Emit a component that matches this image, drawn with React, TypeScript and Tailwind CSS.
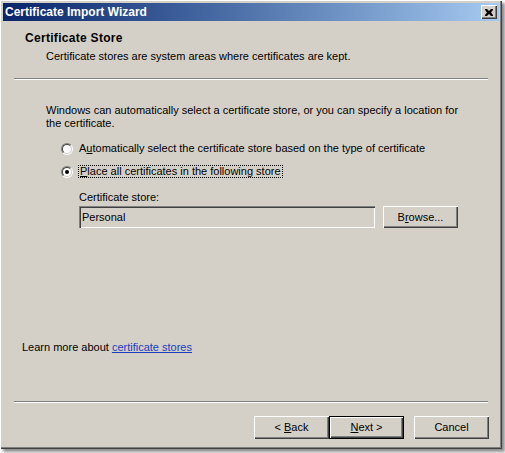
import type { ReactNode } from "react";

const font = { fontFamily: '"Liberation Sans", Arial, sans-serif' };

// classic raised button
function Btn({ children, isDefault, className = "" }: { children: ReactNode; isDefault?: boolean; className?: string }) {
  return (
    <button
      className={`flex shrink-0 items-center justify-center bg-[#d4d0c8] text-[11px] text-black ${
        isDefault
          ? "border border-black shadow-[inset_1px_1px_#fff,inset_-1px_-1px_#404040,inset_-2px_-2px_#808080]"
          : "shadow-[inset_1px_1px_#fff,inset_-1px_-1px_#404040,inset_-2px_-2px_#808080]"
      } ${className}`}
    >
      {children}
    </button>
  );
}

function Radio({ checked }: { checked?: boolean }) {
  return (
    <span className="relative flex h-[12px] w-[12px] shrink-0 items-center justify-center rounded-full border border-[#808080] border-b-white border-r-white">
      <span className="flex h-[10px] w-[10px] items-center justify-center rounded-full border border-[#404040] border-b-[#d4d0c8] border-r-[#d4d0c8] bg-white">
        {checked && <span className="h-[4px] w-[4px] rounded-full bg-black" />}
      </span>
    </span>
  );
}

function Etched() {
  return <div className="mx-[11px] h-[2px] border-t border-[#808080] border-b border-b-white" />;
}

export default function App() {
  return (
    <div className="h-[453px] w-[505px] bg-white" style={font}>
      <div className="flex h-[449px] w-[502px] flex-col bg-[#d4d0c8] p-[3px] shadow-[inset_1px_1px_#fff,inset_-1px_-1px_#404040,inset_-2px_-2px_#808080,3px_3px_3px_rgba(0,0,0,0.45)]">
        {/* title bar */}
        <div className="flex h-[18px] shrink-0 items-center justify-between bg-gradient-to-r from-[#0a246a] to-[#a6caf0] pl-[2px] pr-[2px]">
          <span className="text-[12px] font-bold leading-none text-white">Certificate Import Wizard</span>
          <span className="flex h-[14px] w-[16px] items-center justify-center bg-[#d4d0c8] shadow-[inset_1px_1px_#fff,inset_-1px_-1px_#404040,inset_-2px_-2px_#808080]">
            <svg width="8" height="7" viewBox="0 0 8 7">
              <path d="M0 0h2l2 2 2-2h2v1L6 3.5 8 6v1H6L4 5 2 7H0V6l2-2.5L0 1z" fill="#000" />
            </svg>
          </span>
        </div>

        {/* header */}
        <div className="pl-[22px] pt-[11px] text-[11px] leading-[13px] text-black">
          <div className="text-[12px] font-bold tracking-[0.3px]">Certificate Store</div>
          <div className="mt-[5px] pl-[21px]">Certificate stores are system areas where certificates are kept.</div>
        </div>
        <div className="mt-[15px]">
          <Etched />
        </div>

        {/* body */}
        <div className="mt-[24px] pl-[43px] text-[11px] leading-[13px] text-black">
          <p>
            Windows can automatically select a certificate store, or you can specify a location for
            <br />
            the certificate.
          </p>
          <div className="mt-[12px] flex flex-col gap-[10px] pl-[15px]">
            <label className="flex items-center gap-[5px]">
              <Radio />
              <span className="px-[1px]">
                A<span className="underline">u</span>tomatically select the certificate store based on the type of certificate
              </span>
            </label>
            <label className="flex items-center gap-[5px]">
              <Radio checked />
              <span className="border border-dotted border-black px-[1px] leading-[11px]">
                <span className="underline">P</span>lace all certificates in the following store
              </span>
            </label>
          </div>
          <div className="mt-[13px] pl-[33px]">
            <div>Certificate store:</div>
            <div className="mt-[2px] flex gap-[8px]">
              <div className="flex h-[22px] w-[296px] items-center bg-[#d4d0c8] pl-[3px] shadow-[inset_1px_1px_#808080,inset_2px_2px_#404040,inset_-1px_-1px_#fff,inset_-2px_-2px_#d4d0c8]">
                Personal
              </div>
              <Btn className="h-[22px] w-[75px]">
                B<span className="underline">r</span>owse...
              </Btn>
            </div>
          </div>
        </div>

        <div className="mt-[113px] pl-[19px] text-[11px] leading-[13px] text-black">
          Learn more about <a className="text-[#1a3dc1] underline">certificate stores</a>
        </div>

        <div className="mt-[47px]">
          <Etched />
        </div>

        {/* footer buttons */}
        <div className="mt-[13px] flex justify-end pr-[10px]">
          <Btn className="h-[23px] w-[75px]">
            &lt; <span className="ml-[3px] underline">B</span>ack
          </Btn>
          <Btn isDefault className="h-[23px] w-[75px]">
            <span className="underline">N</span>ext &gt;
          </Btn>
          <Btn className="ml-[10px] h-[23px] w-[75px]">Cancel</Btn>
        </div>
      </div>
    </div>
  );
}
